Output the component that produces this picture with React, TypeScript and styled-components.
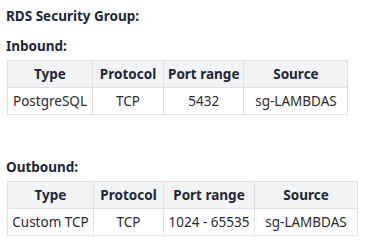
import styled, { createGlobalStyle } from 'styled-components';

const GlobalStyle = createGlobalStyle`
  body {
    margin: 0;
    background: #fff;
    font-family: 'Noto Sans', 'Open Sans', sans-serif;
  }
`;

const Page = styled.div`
  padding: 6px 6px 0 6px;
  color: #1d2738;
`;

const Title = styled.h3`
  margin: 0;
  font-size: 13.5px;
  line-height: 20px;
  font-weight: 700;
`;

const Label = styled.h4<{ $gap: number }>`
  margin: ${(p) => p.$gap}px 0 4px 0;
  font-size: 13.5px;
  line-height: 20px;
  font-weight: 700;
`;

const Table = styled.table`
  border-collapse: collapse;
  margin-left: 1px;
  font-size: 13.5px;
  th,
  td {
    border: 1px solid #dfe1e4;
    height: 26px;
    padding: 0 4px;
    text-align: center;
    white-space: nowrap;
  }
  th {
    background: #f3f4f6;
    font-weight: 700;
    color: #1d2738;
  }
  td {
    color: #2b2b2b;
  }
`;

interface Rule {
  type: string;
  protocol: string;
  range: string;
  source: string;
}

interface Props {
  rule: Rule;
  widths: number[];
}

function RuleTable({ rule, widths }: Props) {
  return (
    <Table>
      <colgroup>
        {widths.map((w, i) => (
          <col key={i} style={{ width: w }} />
        ))}
      </colgroup>
      <thead>
        <tr>
          <th>Type</th>
          <th>Protocol</th>
          <th>Port range</th>
          <th>Source</th>
        </tr>
      </thead>
      <tbody>
        <tr>
          <td>{rule.type}</td>
          <td>{rule.protocol}</td>
          <td>{rule.range}</td>
          <td>{rule.source}</td>
        </tr>
      </tbody>
    </Table>
  );
}

export default function App() {
  return (
    <>
      <GlobalStyle />
      <Page>
        <Title>RDS Security Group:</Title>
        <Label $gap={10}>Inbound:</Label>
        <RuleTable
          widths={[85, 71, 80, 104]}
          rule={{ type: 'PostgreSQL', protocol: 'TCP', range: '5432', source: 'sg-LAMBDAS' }}
        />
        <Label $gap={42}>Outbound:</Label>
        <RuleTable
          widths={[86, 70, 91, 103]}
          rule={{ type: 'Custom TCP', protocol: 'TCP', range: '1024 - 65535', source: 'sg-LAMBDAS' }}
        />
      </Page>
    </>
  );
}
